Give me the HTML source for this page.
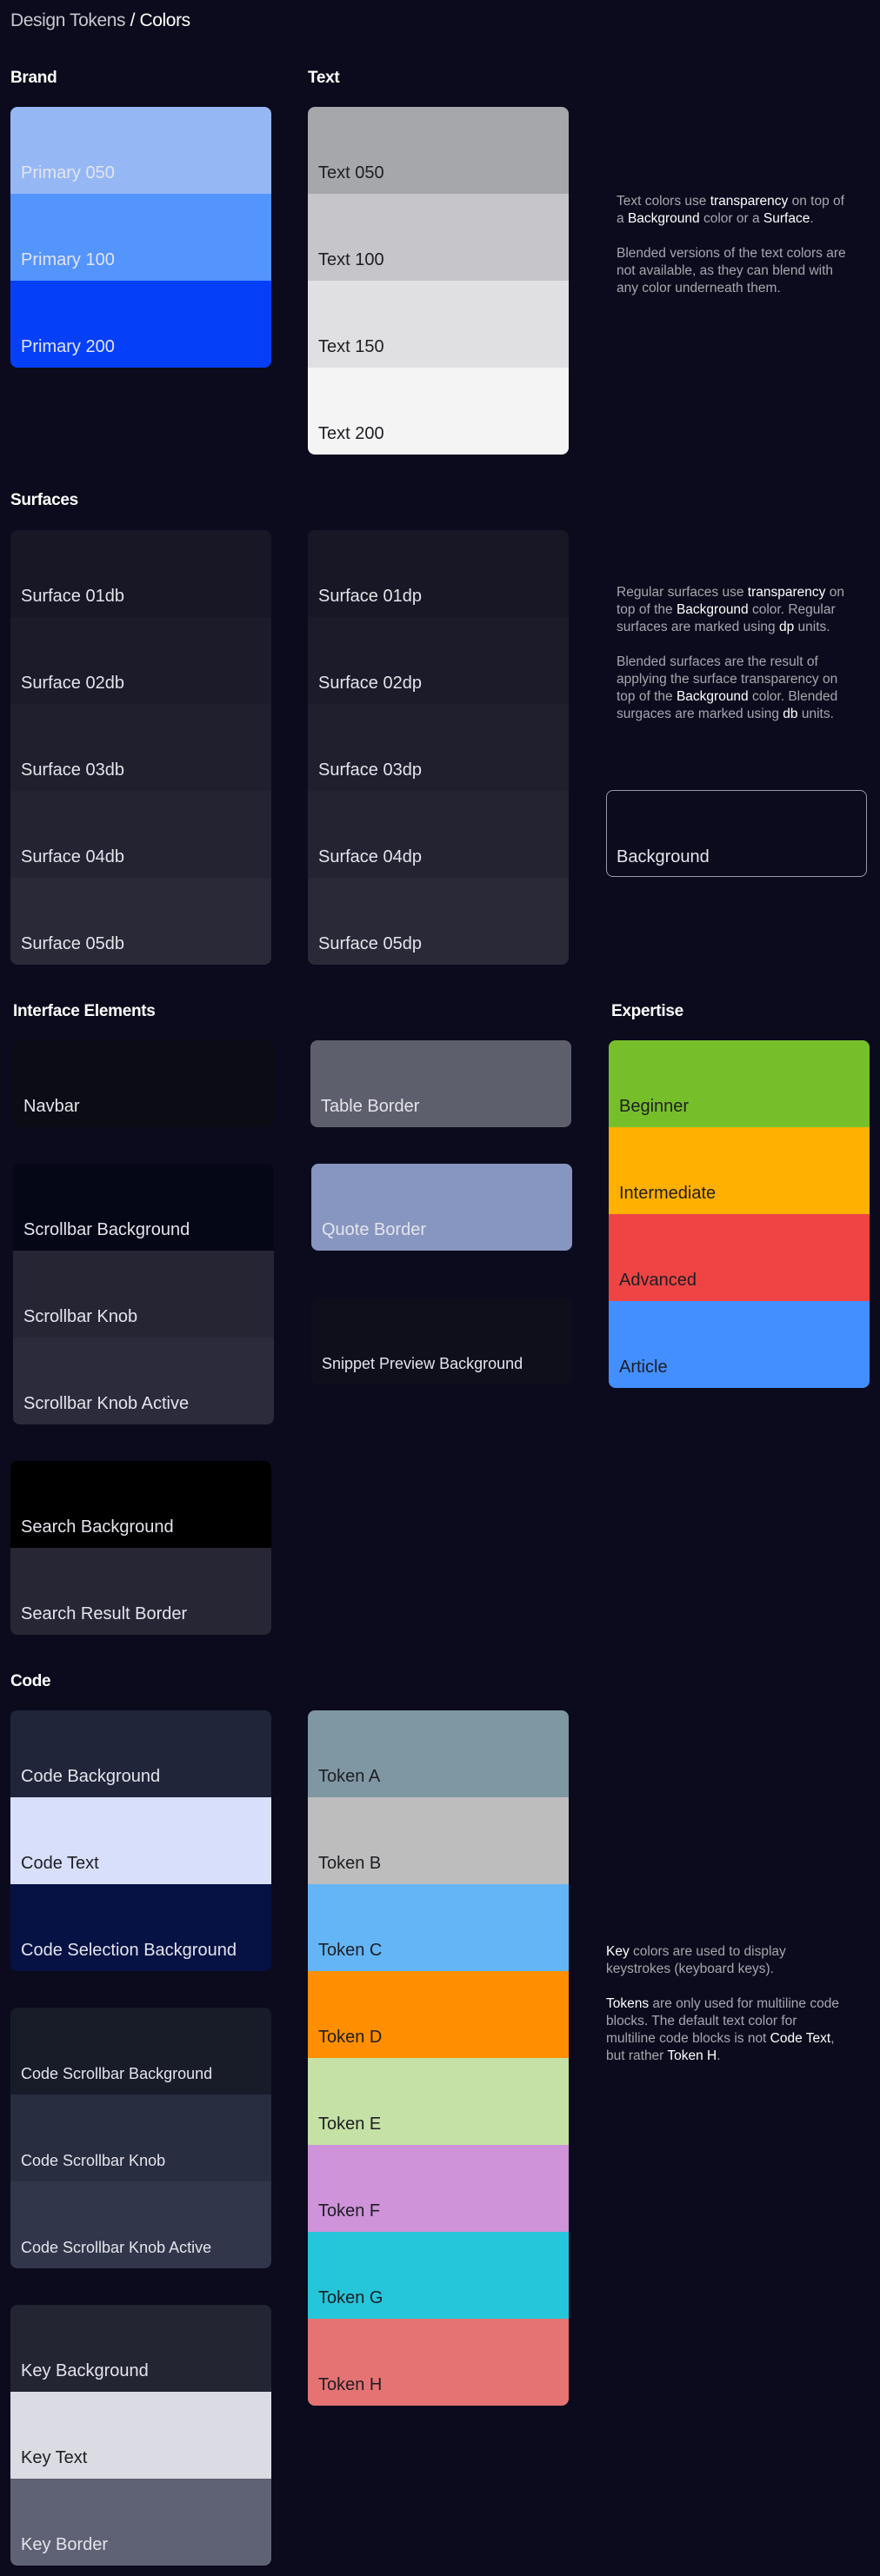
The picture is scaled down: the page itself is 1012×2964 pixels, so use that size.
<!DOCTYPE html>
<html><head><meta charset="utf-8"><style>
*{margin:0;padding:0;box-sizing:border-box}
body{width:1012px;height:2964px;background:#0b0b1d;font-family:"Liberation Sans",sans-serif;position:relative;overflow:hidden}
.a{position:absolute}
.h{position:absolute;color:#fff;font-size:19px;font-weight:bold;letter-spacing:-0.3px}
.card{position:absolute;width:300px;border-radius:8px;overflow:hidden}
.r{height:100px;position:relative}
.r span{position:absolute;left:12px;bottom:13px;font-size:20px;line-height:22px;white-space:nowrap}
.s span{font-size:18px}
.l span{color:#e4e4ec}
.d span{color:#1e1e24}
.p{position:absolute;width:268px;font-size:15.5px;line-height:20px;color:#a6a6b0}
.p b{color:#fff;font-weight:normal}
</style></head><body>
<div class="a" style="left:12px;top:12px;font-size:21px;color:#c8c8d0;letter-spacing:-0.4px">Design Tokens <span style="color:#fff">/ Colors</span></div>

<div class="h" style="left:12px;top:79px">Brand</div>
<div class="h" style="left:354px;top:79px">Text</div>
<div class="card" style="left:12px;top:123px">
<div class="r l" style="background:#95b8f5"><span>Primary 050</span></div>
<div class="r l" style="background:#5494fd"><span>Primary 100</span></div>
<div class="r l" style="background:#0540f8"><span>Primary 200</span></div>
</div>
<div class="card" style="left:354px;top:123px">
<div class="r d" style="background:#a6a7ab"><span>Text 050</span></div>
<div class="r d" style="background:#c5c5ca"><span>Text 100</span></div>
<div class="r d" style="background:#e0e0e2"><span>Text 150</span></div>
<div class="r d" style="background:#f4f4f4"><span>Text 200</span></div>
</div>
<div class="p" style="left:709px;top:222px">Text colors use <b>transparency</b> on top of a <b>Background</b> color or a <b>Surface</b>.<br><br>Blended versions of the text colors are not available, as they can blend with any color underneath them.</div>

<div class="h" style="left:12px;top:565px">Surfaces</div>
<div class="card" style="left:12px;top:610px">
<div class="r l" style="background:#171725"><span>Surface 01db</span></div>
<div class="r l" style="background:#1b1b29"><span>Surface 02db</span></div>
<div class="r l" style="background:#1f1f2d"><span>Surface 03db</span></div>
<div class="r l" style="background:#232331"><span>Surface 04db</span></div>
<div class="r l" style="background:#292937"><span>Surface 05db</span></div>
</div>
<div class="card" style="left:354px;top:610px">
<div class="r l" style="background:#171725"><span>Surface 01dp</span></div>
<div class="r l" style="background:#1b1b29"><span>Surface 02dp</span></div>
<div class="r l" style="background:#1f1f2d"><span>Surface 03dp</span></div>
<div class="r l" style="background:#232331"><span>Surface 04dp</span></div>
<div class="r l" style="background:#292937"><span>Surface 05dp</span></div>
</div>
<div class="p" style="left:709px;top:672px">Regular surfaces use <b>transparency</b> on top of the <b>Background</b> color. Regular surfaces are marked using <b>dp</b> units.<br><br>Blended surfaces are the result of applying the surface transparency on top of the <b>Background</b> color. Blended surgaces are marked using <b>db</b> units.</div>
<div class="card" style="left:697px;top:909px;height:100px;border:1px solid #9a9aa6"><div class="r l"><span style="left:11px;bottom:13px">Background</span></div></div>

<div class="h" style="left:15px;top:1153px">Interface Elements</div>
<div class="h" style="left:703px;top:1153px">Expertise</div>
<div class="card" style="left:15px;top:1197px"><div class="r l" style="background:#0c0c15"><span>Navbar</span></div></div>
<div class="card" style="left:15px;top:1339px">
<div class="r l" style="background:#050616"><span>Scrollbar Background</span></div>
<div class="r l" style="background:#252534"><span>Scrollbar Knob</span></div>
<div class="r l" style="background:#2b2b3b"><span>Scrollbar Knob Active</span></div>
</div>
<div class="card" style="left:12px;top:1681px">
<div class="r l" style="background:#000"><span>Search Background</span></div>
<div class="r l" style="background:#262635"><span>Search Result Border</span></div>
</div>
<div class="card" style="left:357px;top:1197px"><div class="r l" style="background:#5e5f6c"><span>Table Border</span></div></div>
<div class="card" style="left:358px;top:1339px"><div class="r l" style="background:#8796c0"><span>Quote Border</span></div></div>
<div class="card" style="left:358px;top:1493px"><div class="r l s" style="background:#0e0f1a"><span>Snippet Preview Background</span></div></div>
<div class="card" style="left:700px;top:1197px">
<div class="r d" style="background:#77bf2a"><span>Beginner</span></div>
<div class="r d" style="background:#ffb000"><span>Intermediate</span></div>
<div class="r d" style="background:#ee4444"><span>Advanced</span></div>
<div class="r d" style="background:#438fff"><span>Article</span></div>
</div>

<div class="h" style="left:12px;top:1924px">Code</div>
<div class="card" style="left:12px;top:1968px">
<div class="r l" style="background:#20253a"><span>Code Background</span></div>
<div class="r d" style="background:#d8dffa"><span>Code Text</span></div>
<div class="r l" style="background:#061244"><span>Code Selection Background</span></div>
</div>
<div class="card" style="left:12px;top:2310px">
<div class="r l s" style="background:#171c28"><span>Code Scrollbar Background</span></div>
<div class="r l s" style="background:#282d40"><span>Code Scrollbar Knob</span></div>
<div class="r l s" style="background:#31364a"><span>Code Scrollbar Knob Active</span></div>
</div>
<div class="card" style="left:12px;top:2652px">
<div class="r l" style="background:#232533"><span>Key Background</span></div>
<div class="r d" style="background:#dadbe3"><span>Key Text</span></div>
<div class="r l" style="background:#5f6274"><span>Key Border</span></div>
</div>
<div class="card" style="left:354px;top:1968px">
<div class="r d" style="background:#7f97a2"><span>Token A</span></div>
<div class="r d" style="background:#bdbdbd"><span>Token B</span></div>
<div class="r d" style="background:#64b5f6"><span>Token C</span></div>
<div class="r d" style="background:#ff8f00"><span>Token D</span></div>
<div class="r d" style="background:#c5e1a5"><span>Token E</span></div>
<div class="r d" style="background:#ce93d8"><span>Token F</span></div>
<div class="r d" style="background:#26c6da"><span>Token G</span></div>
<div class="r d" style="background:#e57373"><span>Token H</span></div>
</div>
<div class="p" style="left:697px;top:2236px">
<b>Key</b> colors are used to display keystrokes (keyboard keys).<br><br><b>Tokens</b> are only used for multiline code blocks. The default text color for multiline code blocks is not <b>Code Text</b>, but rather <b>Token H</b>.</div>
</body></html>
